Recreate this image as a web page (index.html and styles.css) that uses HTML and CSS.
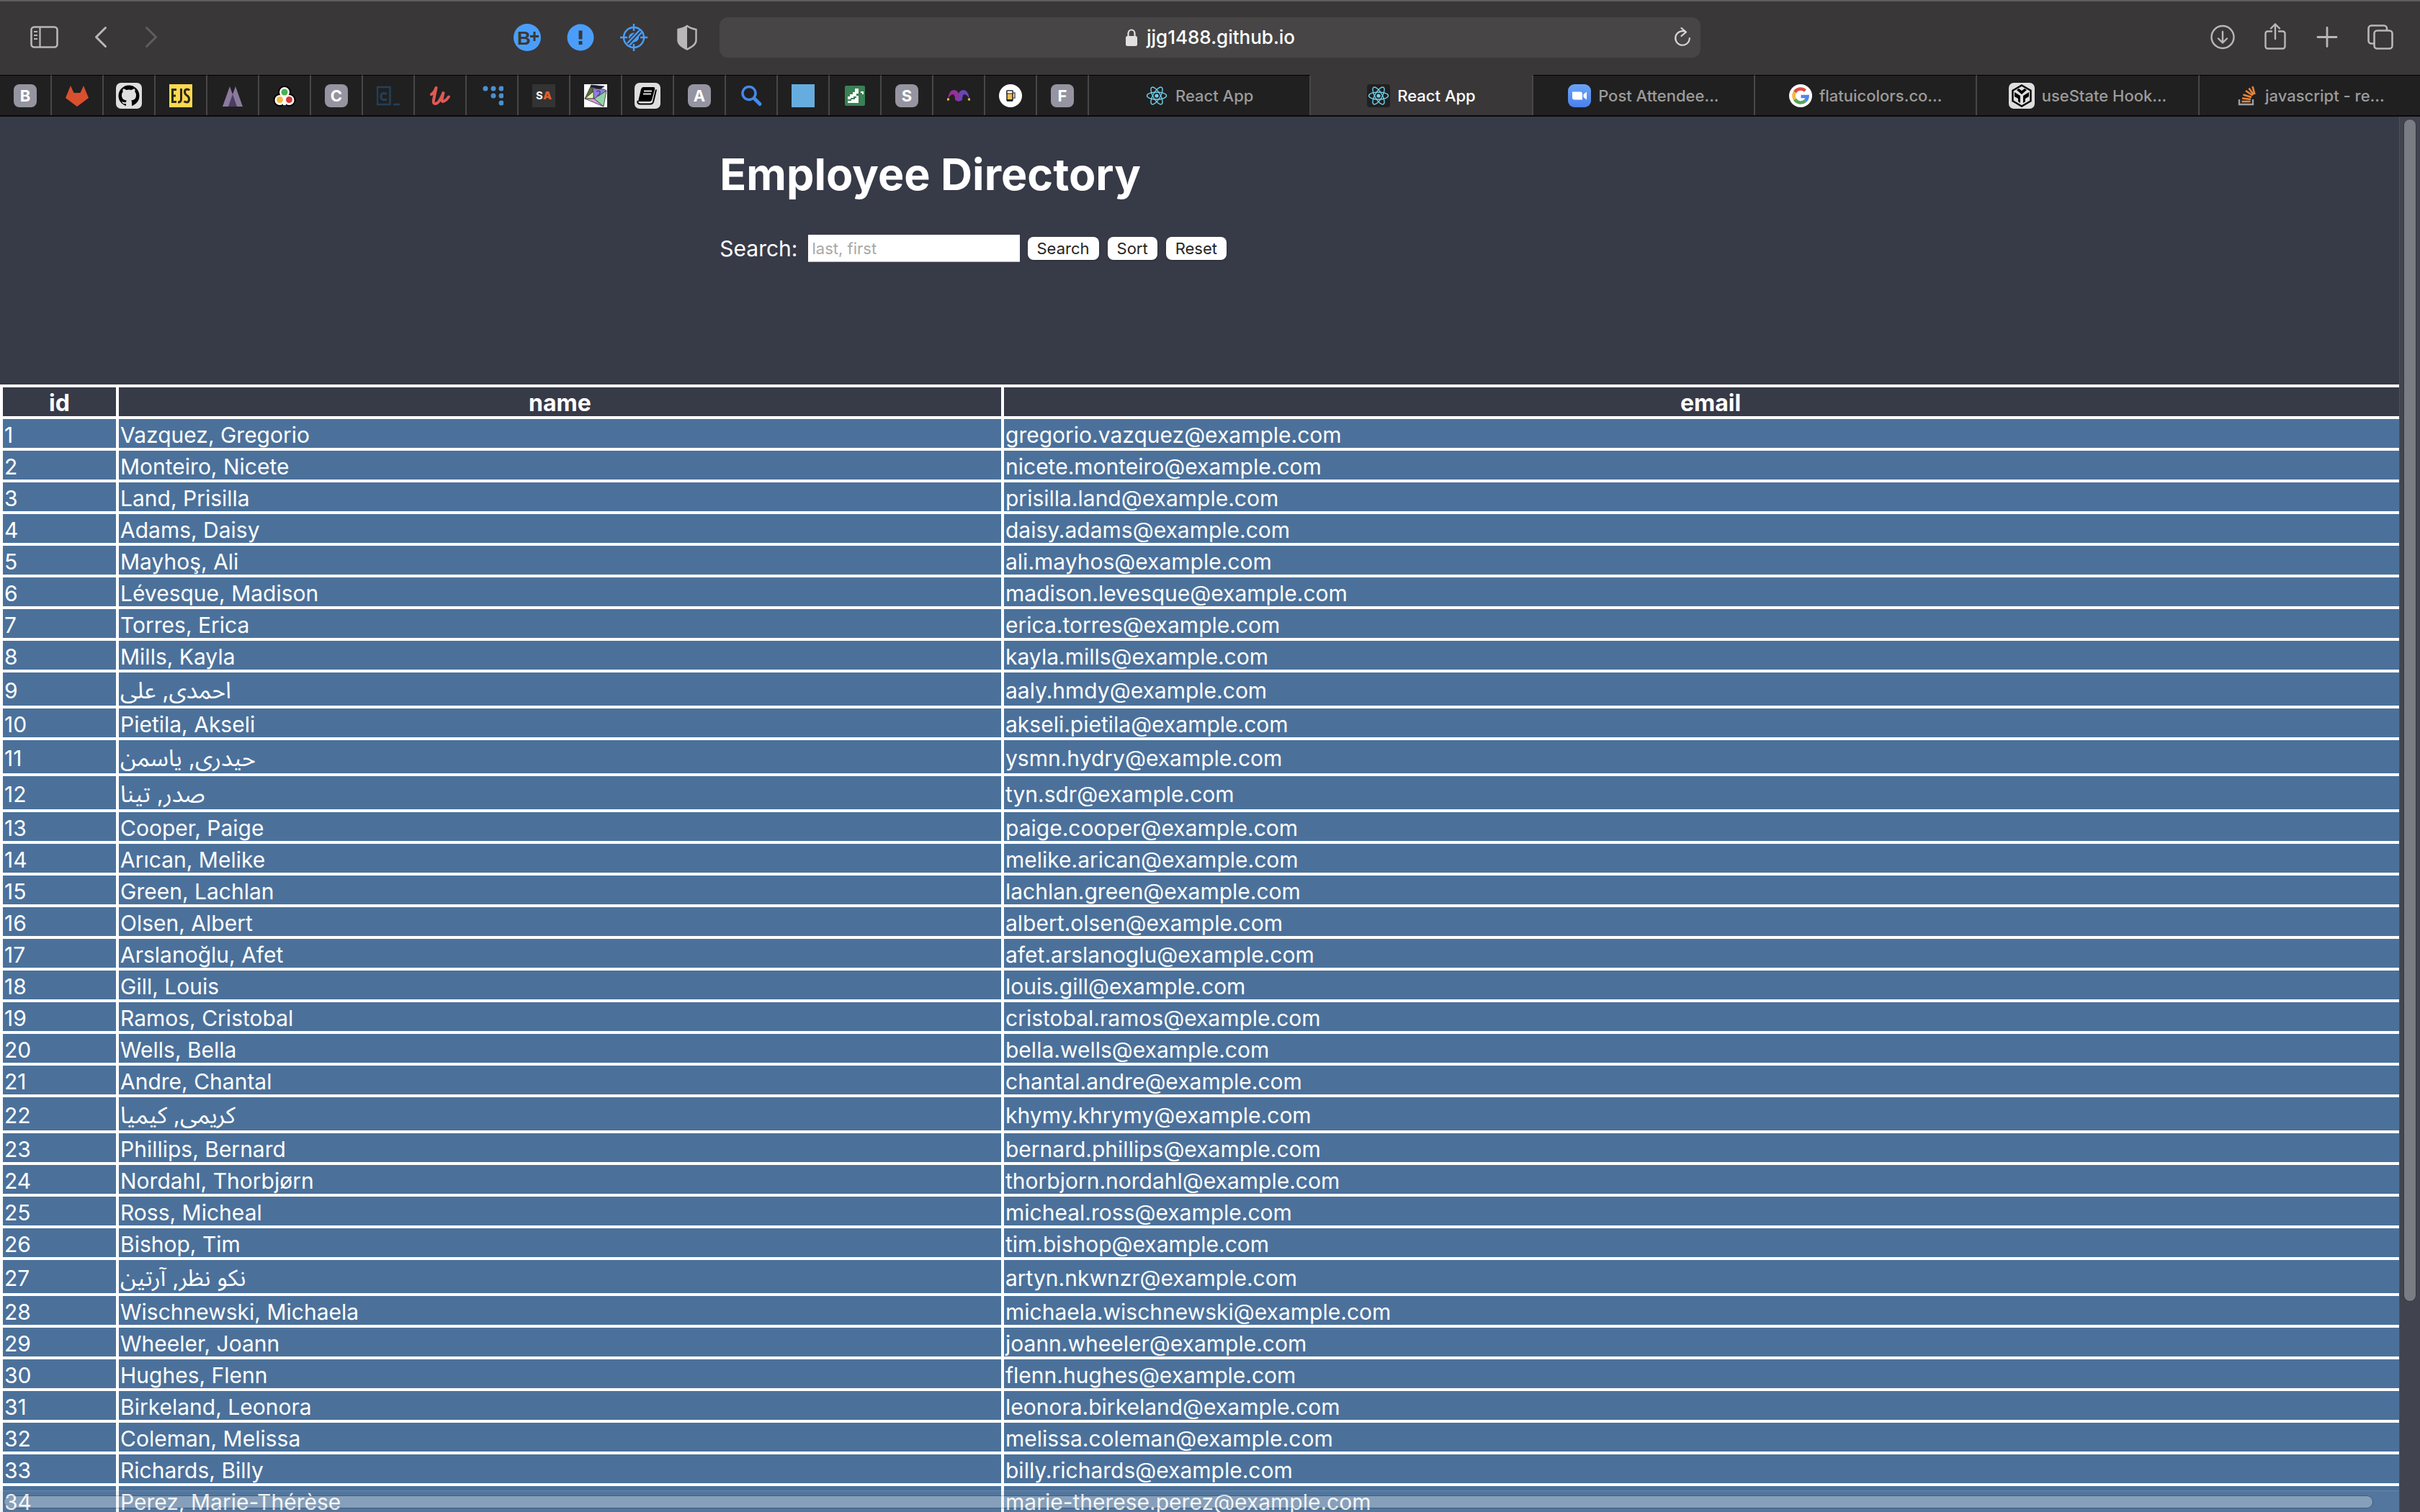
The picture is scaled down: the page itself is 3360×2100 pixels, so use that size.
FILE: index.html
```html
<!DOCTYPE html>
<html lang="en">
<head>
<meta charset="utf-8">
<title>React App</title>
<link rel="stylesheet" href="styles.css">
</head>
<body>
<header class="toolbar">
  <div class="toolbar-side">
    <div class="tools nav-tools">
      <button class="tool" aria-label="Sidebar"><svg width="40" height="40" viewBox="0 0 40 40" fill="none" stroke="#b9b7b8" stroke-width="2.6"><rect x="1.5" y="5.5" width="36" height="28" rx="4"/><path d="M13.500 5.500v28M5 12h5M5 17h5M5 22h5" stroke-width="2.2"/></svg></button>
      <button class="tool" aria-label="Back"><svg width="24" height="40" viewBox="0 0 24 40" fill="none" stroke="#b9b7b8" stroke-width="3" stroke-linecap="round" stroke-linejoin="round"><path d="M18.500 6.500L5.500 19.500l13 13"/></svg></button>
      <button class="tool" aria-label="Forward"><svg width="24" height="40" viewBox="0 0 24 40" fill="none" stroke="#5f5d5e" stroke-width="3" stroke-linecap="round" stroke-linejoin="round"><path d="M5.500 6.500l13 13-13 13"/></svg></button>
    </div>
    <div class="tools">
      <button class="tool" aria-label="Extension B"><svg width="40" height="40" viewBox="0 0 40 40"><circle cx="20" cy="20" r="19" fill="#4a9efa"/><text x="6" y="30" class="badge-letter">B</text><path d="M30 12v13M24 18.500h12" stroke="#3a3738" stroke-width="3"/></svg></button>
      <button class="tool" aria-label="Alerts"><svg width="40" height="40" viewBox="0 0 40 40"><circle cx="20" cy="20" r="18.500" fill="#4a9efa"/><path d="M20 10.500v12M20 25v5" stroke="#3a3738" stroke-width="5"/></svg></button>
      <button class="tool" aria-label="Blocker"><svg width="40" height="40" viewBox="0 0 40 40" fill="none" stroke="#4a9efa" stroke-width="2.400"><circle cx="20" cy="20" r="14"/><path d="M20 1v10M20 29v10M1 20h10M29 20h10M11 28L28 10M14 31L31 13"/><path d="M13 22c-1-5 3-9 8-8.500zM27 18c1 5-3 9-8 8.500z" fill="#4a9efa" stroke="none"/></svg></button>
      <button class="tool" aria-label="Privacy report"><svg width="40" height="40" viewBox="0 0 40 40"><path d="M20 4c4 3 8 4 12.500 5v15c0 6-6 9-12.500 12.500C13.500 33 7.500 30 7.500 24V9C12 8 16 7 20 4z" fill="none" stroke="#b9b7b8" stroke-width="2.400"/><path d="M20 4v32.500C13.500 33 7.500 30 7.500 24V9C12 8 16 7 20 4z" fill="#b9b7b8"/></svg></button>
    </div>
  </div>
  <div class="address">
    <button class="address-url"><svg width="18" height="26" viewBox="0 0 18 26"><rect x="1" y="11" width="16" height="14" rx="2.500" fill="#e2e1e1"/><path d="M4.500 12V7.500a4.500 5 0 0 1 9 0V12" fill="none" stroke="#e2e1e1" stroke-width="2.200"/></svg><span>jjg1488.github.io</span></button>
    <button class="tool reload" aria-label="Reload"><svg width="24" height="30" viewBox="0 0 24 30" fill="none" stroke="#d8d7d7" stroke-width="2.200" stroke-linecap="round" stroke-linejoin="round"><path d="M17 7.500A9.800 9.800 0 1 0 21.800 16M10.500 2l6.500 5.500-6.500 5.500"/></svg></button>
  </div>
  <div class="toolbar-side toolbar-end">
    <button class="tool" aria-label="Downloads"><svg width="40" height="40" viewBox="0 0 40 40" fill="none" stroke="#b9b7b8" stroke-width="2.400" stroke-linecap="round" stroke-linejoin="round"><circle cx="20" cy="19.500" r="15.500"/><path d="M20 12v15M14 21.500l6 6 6-6"/></svg></button>
    <button class="tool" aria-label="Share"><svg width="40" height="40" viewBox="0 0 40 40" fill="none" stroke="#b9b7b8" stroke-width="2.400" stroke-linecap="round" stroke-linejoin="round"><path d="M15 11.500H9.500a3 3 0 0 0-3 3v18a3 3 0 0 0 3 3h21a3 3 0 0 0 3-3v-18a3 3 0 0 0-3-3H25M20 22V1.500M14 7.500l6-6 6 6"/></svg></button>
    <button class="tool" aria-label="New tab"><svg width="40" height="40" viewBox="0 0 40 40" fill="none" stroke="#b9b7b8" stroke-width="2.800" stroke-linecap="round"><path d="M19 6.500v26M6 19.500h26"/></svg></button>
    <button class="tool" aria-label="Tab overview"><svg width="40" height="40" viewBox="0 0 40 40" fill="none" stroke="#b9b7b8" stroke-width="2.600"><rect x="11.500" y="10.500" width="25" height="25" rx="4"/><path d="M11 28.500H7.500a4 4 0 0 1-4-4V7.500a4 4 0 0 1 4-4h17.500a4 4 0 0 1 4 4V10"/></svg></button>
  </div>
</header>
<nav class="tabs" aria-label="Tabs">
  <button class="tab pinned"><span class="letter">B</span></button>
  <button class="tab pinned" aria-label="GitLab"><svg width="32" height="32" viewBox="0 0 32 32"><path d="M7 2l4.500 10h9L25 2l7 17-16 12L0 19z" fill="#d9502f"/></svg></button>
  <button class="tab pinned" aria-label="GitHub"><svg width="36" height="36" viewBox="0 0 36 36"><rect width="36" height="36" rx="7" fill="#dedede"/><circle cx="18" cy="18" r="14.500"/><path d="M14 33v-4c-4 1-5-1-6-3 3 1 3 1.500 6 1 0-1 .5-2 1-2.500-4.500-.5-7-2.500-7-7.500 0-2 .6-3.200 1.700-4.500-.4-1.500-.3-3 .2-4.300 1.500 0 3 .8 4.500 1.800a14 14 0 0 1 7.200 0c1.500-1 3-1.800 4.500-1.800.5 1.300.6 2.800.2 4.300 1.100 1.300 1.700 2.500 1.700 4.500 0 5-2.500 7-7 7.500.6.600 1 1.500 1 3v5.500z" fill="#dedede"/></svg></button>
  <button class="tab pinned" aria-label="EJS"><svg width="32" height="32" viewBox="0 0 32 32"><rect width="32" height="32" fill="#fcd94f"/><g fill="none" stroke="#2b2a1c" stroke-width="3"><path d="M10 7.500H4.500v17H10M4.500 16H9M16.500 6v15q0 4-4.500 4M28 8.500q-1-1.500-3-1.500-3.500 0-3.500 3.500 0 3 3 5t3 5q0 4.500-3 4.500-2.500 0-4-1.500"/></g></svg></button>
  <button class="tab pinned" aria-label="Peaks"><svg width="32" height="32" viewBox="0 0 32 32"><path d="M2 31L12 3l4 11L20 3l10 28z" fill="#8a7a9e"/><path d="M10 31l6-17 6 17z" fill="#4a3d60"/></svg></button>
  <button class="tab pinned" aria-label="Trefoil"><svg width="32" height="32" viewBox="0 0 32 32"><g stroke="#000" stroke-width="4" fill="#fff"><circle cx="16" cy="11" r="7"/><circle cx="9.500" cy="22" r="7"/><circle cx="22.500" cy="22" r="7"/></g><g fill="#fff"><circle cx="16" cy="11" r="7"/><circle cx="9.500" cy="22" r="7"/><circle cx="22.500" cy="22" r="7"/><path d="M14 16h4v13h-4z"/></g><circle cx="16" cy="11" r="4.500" fill="#4caf50"/><circle cx="9.500" cy="21.500" r="4.500" fill="#f4b73f"/><circle cx="22.500" cy="21.500" r="4.500" fill="#d93636"/></svg></button>
  <button class="tab pinned"><span class="letter">C</span></button>
  <button class="tab pinned" aria-label="Code"><svg width="32" height="32" viewBox="0 0 32 32" fill="none" stroke="#23405a"><path d="M1 4h17.500v24H1z" stroke-width="2.500"/><path d="M14 13.500q-8-3-8 3.500t8 4" stroke-width="3"/><path d="M23 28h9" stroke-width="2.500"/></svg></button>
  <button class="tab pinned" aria-label="Udemy"><svg width="32" height="32" viewBox="0 0 32 32" fill="none" stroke="#df5a55" stroke-linecap="round" stroke-linejoin="round"><path d="M4 14q4-2 6.500-9L7 22q-1 5 2.500 5 5 0 11-15l-2 9q-.5 4 3 2.500 3.500-1.500 6.500-6" stroke-width="4"/></svg></button>
  <button class="tab pinned" aria-label="Dots"><svg width="32" height="32" viewBox="0 0 32 32" fill="#4b8fd0"><circle cx="7" cy="6" r="3.500"/><circle cx="18" cy="6" r="3.500"/><circle cx="29" cy="6" r="3.500"/><circle cx="18" cy="16" r="3.500"/><circle cx="29" cy="16" r="3.500"/><circle cx="29" cy="26" r="3.500"/></svg></button>
  <button class="tab pinned"><span class="mono">S<b>A</b></span></button>
  <button class="tab pinned" aria-label="Polyhedron"><svg width="32" height="32" viewBox="0 0 32 32"><path fill="#fff" d="M0 0h32v32H0z"/><g stroke="#333" stroke-width=".8"><path d="M10 1L1 20l13-8z" fill="#5d6e3c"/><path d="M10 1l-1 3 13 3 6-4z" fill="#1b1a3a"/><path d="M12 6l16 1 3 2-14 12-4-1z" fill="#8c82d6"/><path d="M1 20l12-10 0 10z" fill="#e2f5b0"/><path d="M1 20l13 0 13 11z" fill="#dd9be0"/><path d="M14 20L31 9l-4 22z" fill="#93d1a8"/></g><path d="M17 10q6-2 5 2t-4 4" fill="none" stroke="#4941a0" stroke-width="1.500"/></svg></button>
  <button class="tab pinned" aria-label="Book"><svg width="36" height="36" viewBox="0 0 36 36"><rect width="36" height="36" rx="7" fill="#dedede"/><path d="M12 6h14q3 0 2 3l-4 15q-1 2-3 2H5l4-17q1-3 3-3z"/><path d="M4.500 25q-1 4 3 4.500H22q3 0 4-3l4-17" fill="none" stroke="#000" stroke-width="2"/><path d="M13 11.500h11M12 15.500h11" stroke="#dedede" stroke-width="1.800"/></svg></button>
  <button class="tab pinned"><span class="letter">A</span></button>
  <button class="tab pinned" aria-label="Search"><svg width="32" height="32" viewBox="0 0 32 32" fill="none" stroke="#4688ea" stroke-linecap="round"><circle cx="13" cy="12.500" r="9" stroke-width="3.500"/><path d="M20 19.500l8 8" stroke-width="5"/></svg></button>
  <button class="tab pinned" aria-label="Blue"><svg width="32" height="32" viewBox="0 0 32 32"><path fill="#66addf" d="M0 0h32v32H0z"/></svg></button>
  <button class="tab pinned" aria-label="Stairs"><svg width="32" height="32" viewBox="0 0 32 32"><rect x="2" y="2" width="28" height="28" rx="2" fill="#3a8155"/><path fill="#fff" d="M6 20v-3h3v-3h4v-3h3V6h5v7h-3v4h-4v2h-4v2H6zM6 26v-3h5v-2h5v-2h2v-3h3v10zM24 10h4v4h-2v-2h-2z"/></svg></button>
  <button class="tab pinned"><span class="letter">S</span></button>
  <button class="tab pinned" aria-label="Jester hat"><svg width="32" height="32" viewBox="0 0 32 32"><path d="M1 20Q3 8 9 8q5 0 7 5v11l-5-2q0-8-3-8t-7 6z" fill="#96309a"/><path d="M31 20Q29 8 23 8q-5 0-7 5v11l5-2q0-8 3-8t7 6z" fill="#6a45b8"/><circle cx="1.500" cy="21" r="1.800" fill="#f0b93a"/><circle cx="30.500" cy="21" r="1.800" fill="#f0b93a"/></svg></button>
  <button class="tab pinned" aria-label="Beer"><svg width="32" height="32" viewBox="0 0 32 32"><circle cx="16" cy="16" r="16" fill="#fff"/><rect x="11" y="9" width="8" height="14" rx="1" fill="#ecc04e" stroke="#222" stroke-width="1.500"/><path d="M11 9h8v4h-8z" fill="#fff" stroke="#222" stroke-width="1.200"/><path d="M19 12h3v7h-3" fill="none" stroke="#555" stroke-width="1.500"/><path d="M11 21h8v2.500h-8z" fill="#222"/></svg></button>
  <button class="tab pinned"><span class="letter">F</span></button>
  <button class="tab"><svg width="32" height="32" viewBox="0 0 32 32"><use href="#atom"/></svg><span>React App</span></button>
  <button class="tab active"><svg width="32" height="32" viewBox="0 0 32 32"><g id="atom"><rect width="32" height="32" rx="4" fill="#202020"/><g fill="none" stroke="#6fd2ee" stroke-width="1.400"><ellipse cx="16" cy="16" rx="13.500" ry="5"/><ellipse cx="16" cy="16" rx="13.500" ry="5" transform="rotate(60 16 16)"/><ellipse cx="16" cy="16" rx="13.500" ry="5" transform="rotate(120 16 16)"/></g><circle cx="16" cy="16" r="2.600" fill="#6fd2ee"/></g></svg><span>React App</span></button>
  <button class="tab"><svg width="32" height="32" viewBox="0 0 32 32"><defs><linearGradient id="zoom" x2="0" y2="1"><stop stop-color="#6aa5f6"/><stop offset="1" stop-color="#4a80ee"/></linearGradient></defs><rect width="32" height="32" rx="9" fill="url(#zoom)"/><path d="M6 10.500h11q3 0 3 3v8H9q-3 0-3-3zM21.500 14l4.500-3.500v11L21.500 18z" fill="#fff"/></svg><span>Post Attendee...</span></button>
  <button class="tab"><svg width="32" height="32" viewBox="0 0 32 32"><circle cx="16" cy="16" r="16" fill="#fff"/><g fill="none" stroke-width="4.600"><path d="M22.500 9A9.500 9.500 0 0 0 8 11" stroke="#dd4b3e"/><path d="M8 11a9.500 9.500 0 0 0 0 10" stroke="#f2bb42"/><path d="M8 21a9.500 9.500 0 0 0 14.500 2" stroke="#58a55c"/><path d="M22.500 23a9 9 0 0 0 3-6H16.500" stroke="#5086ec"/></g></svg><span>flatuicolors.co...</span></button>
  <button class="tab"><svg width="36" height="36" viewBox="0 0 36 36"><rect width="36" height="36" rx="7" fill="#dedede"/><path d="M18 3.500l12.500 7.300v14.400L18 32.500 5.500 25.200V10.800z" fill="none" stroke="#000" stroke-width="2.400"/><path d="M11 10l3-2 4 3 4-3 3 2-7 6zM8 13l8 5v10l-3-2v-4l-5-3zM28 13l-8 5v10l3-2v-4l5-3z"/></svg><span>useState Hook...</span></button>
  <button class="tab"><svg width="32" height="32" viewBox="0 0 32 32" fill="none"><path d="M6 21v7h19v-7" stroke="#9aa0a6" stroke-width="2.400"/><path d="M9.500 24h12M10 19.500l12 1.500M11.500 14.500L23 18M15 9l9.500 6.500M19.500 5.500l6.500 9M24.500 3l3 11" stroke="#e8843c" stroke-width="2.600"/></svg><span>javascript - re...</span></button>
</nav>
<div class="viewport">
  <main class="page">
    <div class="intro">
      <h1>Employee Directory</h1>
      <form class="search">
        <label for="q">Search:</label>
        <input id="q" type="text" placeholder="last, first">
        <button type="button">Search</button>
        <button type="button">Sort</button>
        <button type="button">Reset</button>
      </form>
    </div>
    <table class="directory">
      <thead><tr><th class="col-id">id</th><th class="col-name">name</th><th>email</th></tr></thead>
      <tbody>
        <tr><td>1</td><td>Vazquez, Gregorio</td><td>gregorio.vazquez@example.com</td></tr>
        <tr><td>2</td><td>Monteiro, Nicete</td><td>nicete.monteiro@example.com</td></tr>
        <tr><td>3</td><td>Land, Prisilla</td><td>prisilla.land@example.com</td></tr>
        <tr><td>4</td><td>Adams, Daisy</td><td>daisy.adams@example.com</td></tr>
        <tr><td>5</td><td>Mayhoş, Ali</td><td>ali.mayhos@example.com</td></tr>
        <tr><td>6</td><td>Lévesque, Madison</td><td>madison.levesque@example.com</td></tr>
        <tr><td>7</td><td>Torres, Erica</td><td>erica.torres@example.com</td></tr>
        <tr><td>8</td><td>Mills, Kayla</td><td>kayla.mills@example.com</td></tr>
        <tr class="tall"><td>9</td><td class="persian">احمدی, علی</td><td>aaly.hmdy@example.com</td></tr>
        <tr><td>10</td><td>Pietila, Akseli</td><td>akseli.pietila@example.com</td></tr>
        <tr class="tall"><td>11</td><td class="persian">حیدری, یاسمن</td><td>ysmn.hydry@example.com</td></tr>
        <tr class="tall"><td>12</td><td class="persian">صدر, تینا</td><td>tyn.sdr@example.com</td></tr>
        <tr><td>13</td><td>Cooper, Paige</td><td>paige.cooper@example.com</td></tr>
        <tr><td>14</td><td>Arıcan, Melike</td><td>melike.arican@example.com</td></tr>
        <tr><td>15</td><td>Green, Lachlan</td><td>lachlan.green@example.com</td></tr>
        <tr><td>16</td><td>Olsen, Albert</td><td>albert.olsen@example.com</td></tr>
        <tr><td>17</td><td>Arslanoğlu, Afet</td><td>afet.arslanoglu@example.com</td></tr>
        <tr><td>18</td><td>Gill, Louis</td><td>louis.gill@example.com</td></tr>
        <tr><td>19</td><td>Ramos, Cristobal</td><td>cristobal.ramos@example.com</td></tr>
        <tr><td>20</td><td>Wells, Bella</td><td>bella.wells@example.com</td></tr>
        <tr><td>21</td><td>Andre, Chantal</td><td>chantal.andre@example.com</td></tr>
        <tr class="tall"><td>22</td><td class="persian">کریمی, کیمیا</td><td>khymy.khrymy@example.com</td></tr>
        <tr><td>23</td><td>Phillips, Bernard</td><td>bernard.phillips@example.com</td></tr>
        <tr><td>24</td><td>Nordahl, Thorbjørn</td><td>thorbjorn.nordahl@example.com</td></tr>
        <tr><td>25</td><td>Ross, Micheal</td><td>micheal.ross@example.com</td></tr>
        <tr><td>26</td><td>Bishop, Tim</td><td>tim.bishop@example.com</td></tr>
        <tr class="tall"><td>27</td><td class="persian">نکو نظر, آرتین</td><td>artyn.nkwnzr@example.com</td></tr>
        <tr><td>28</td><td>Wischnewski, Michaela</td><td>michaela.wischnewski@example.com</td></tr>
        <tr><td>29</td><td>Wheeler, Joann</td><td>joann.wheeler@example.com</td></tr>
        <tr><td>30</td><td>Hughes, Flenn</td><td>flenn.hughes@example.com</td></tr>
        <tr><td>31</td><td>Birkeland, Leonora</td><td>leonora.birkeland@example.com</td></tr>
        <tr><td>32</td><td>Coleman, Melissa</td><td>melissa.coleman@example.com</td></tr>
        <tr><td>33</td><td>Richards, Billy</td><td>billy.richards@example.com</td></tr>
        <tr><td>34</td><td>Perez, Marie-Thérèse</td><td>marie-therese.perez@example.com</td></tr>
      </tbody>
    </table>
    <div class="scroll-x"><div class="thumb"></div></div>
  </main>
  <div class="scroll-y"><div class="thumb"></div></div>
</div>
</body>
</html>
```
FILE: styles.css
```css
* {
  box-sizing: border-box;
}

body {
  margin: 0;
  height: 100vh;
  display: flex;
  flex-direction: column;
  overflow: hidden;
  background: #373a47;
  color: #fff;
  font-family: Inter, "Liberation Sans", "Noto Sans Arabic", "DejaVu Sans", sans-serif;
  font-size: 30px;
}

button {
  margin: 0;
  padding: 0;
  border: 0;
  background: none;
  color: inherit;
  font-family: inherit;
}

svg {
  display: block;
  flex: none;
}

/* Browser toolbar */
.toolbar {
  flex: none;
  height: 104px;
  display: grid;
  grid-template-columns: 1fr 1362px 1fr;
  align-items: center;
  background: #3a3738;
  box-shadow: inset 0 2px #5f5d5e;
}

.toolbar-side {
  display: flex;
  justify-content: space-between;
  padding: 0 25px 0 42px;
}

.toolbar-end {
  justify-content: flex-end;
  gap: 33px;
  padding: 0 35px 0 0;
}

.tools {
  display: flex;
  gap: 34px;
}

.nav-tools {
  gap: 46px;
}

.badge-letter {
  font-family: "Liberation Sans", sans-serif;
  font-size: 26px;
  font-weight: 700;
  fill: #3a3738;
}

.address {
  height: 56px;
  display: grid;
  grid-template-columns: 24px 1fr 24px;
  align-items: center;
  padding: 0 13px;
  border-radius: 12px;
  background: #474546;
}

.address-url {
  grid-column: 2;
  display: flex;
  align-items: center;
  justify-content: center;
  gap: 12px;
  font-size: 26px;
  font-weight: 500;
  line-height: 32px;
}

/* Tab strip */
.tabs {
  flex: none;
  height: 58px;
  display: flex;
  background: #202020;
  border-bottom: 2px solid #0a0a0c;
}

.tab {
  flex: 1 1 0;
  min-width: 0;
  display: flex;
  align-items: center;
  justify-content: center;
  gap: 10px;
  border-top: 1px solid #000;
  border-right: 2px solid #474747;
  color: #9b9b9b;
  font-size: 22px;
  font-weight: 500;
  white-space: nowrap;
}

.tab:last-child {
  border-right: 0;
}

.pinned {
  flex: 0 0 72px;
}

.active {
  border-top-color: #3a3738;
  background: #3a3738;
  color: #fff;
}

.letter {
  width: 32px;
  height: 32px;
  border-radius: 8px;
  background: #9594a0;
  color: #fff;
  font-size: 22px;
  font-weight: 700;
  line-height: 32px;
}

.mono {
  width: 32px;
  height: 32px;
  background: #333;
  color: #fff;
  font-size: 15px;
  font-weight: 700;
  line-height: 32px;
}

.mono b {
  color: #e0602f;
}

/* Page area */
.viewport {
  flex: 1;
  min-height: 0;
  display: flex;
}

.page {
  flex: 1;
  min-width: 0;
  position: relative;
  overflow: hidden;
}

.intro {
  padding: 42px 0 170px 30%;
}

h1 {
  margin: 0 0 46px;
  font-size: 61px;
  font-weight: 700;
  line-height: 76px;
}

.search {
  display: flex;
  align-items: center;
  height: 38px;
}

.search label {
  line-height: 38px;
}

.search input {
  width: 294px;
  height: 38px;
  margin: 0 11px 0 14px;
  padding: 2px 6px;
  border: 0;
  border-bottom: 1px solid #bbb;
  border-radius: 0;
  background: #fff;
  font-family: inherit;
  font-size: 22px;
}

.search input::placeholder {
  color: #a9a9a9;
}

.search button {
  height: 32px;
  margin-right: 12px;
  padding: 0 13px;
  border-radius: 8px;
  background: #fff;
  color: #262626;
  font-size: 22px;
  line-height: 32px;
  box-shadow: 0 1px 2px rgba(0, 0, 0, 0.3);
}

.directory {
  width: 100vw;
  table-layout: fixed;
  border-collapse: collapse;
}

.directory th,
.directory td {
  height: 44px;
  padding: 4px 2px 0;
  border: 4px solid #fff;
  line-height: 36px;
}

.directory th {
  font-size: 32px;
}

.directory td {
  background: #4b719b;
}

.directory .tall td {
  height: 50px;
  line-height: 42px;
}

.directory .persian {
  font-size: 32px;
}

.col-id {
  width: 161px;
}

.col-name {
  width: 1229px;
}

/* Scrollbars */
.scroll-x {
  position: absolute;
  left: 0;
  right: 0;
  bottom: 0;
  height: 30px;
  padding: 7px 37px 6px 6px;
  border-top: 1px solid rgba(255, 255, 255, 0.12);
  background: rgba(140, 160, 170, 0.12);
}

.scroll-y {
  flex: none;
  width: 29px;
  padding: 4px 6px;
  border-left: 1px solid #4d505a;
  background: #41444f;
}

.thumb {
  height: 100%;
  border-radius: 8px;
  background: rgba(255, 255, 255, 0.3);
  box-shadow: 0 0 0 1px rgba(0, 0, 0, 0.2);
}

.scroll-y .thumb {
  height: 85%;
}
```
